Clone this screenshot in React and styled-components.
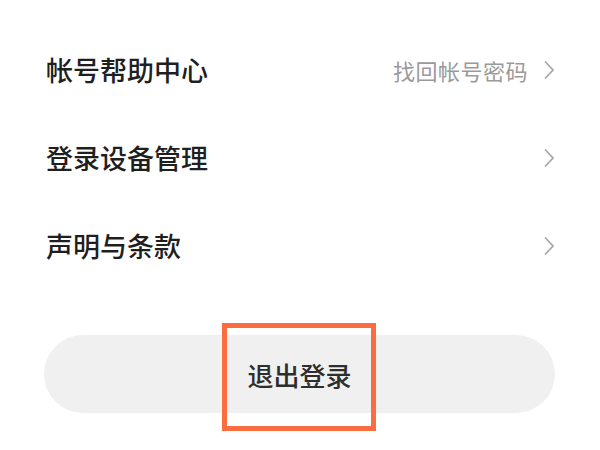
import styled, { createGlobalStyle } from "styled-components";

const GlobalStyle = createGlobalStyle`
  html, body {
    margin: 0;
    padding: 0;
    background: #ffffff;
  }
  body {
    font-family: "Noto Sans CJK SC", "Noto Sans", sans-serif;
  }
`;

const Page = styled.div`
  width: 600px;
  height: 450px;
  box-sizing: border-box;
  padding: 25px 45px 0 44px;
  background: #ffffff;
  overflow: hidden;
`;

const List = styled.div`
  display: flex;
  flex-direction: column;
`;

const Row = styled.div`
  height: 88px;
  display: flex;
  align-items: center;
  justify-content: space-between;
  padding-left: 2px;
`;

const Label = styled.span`
  font-size: 27px;
  font-weight: 500;
  color: #1f1f1f;
`;

const Side = styled.div`
  display: flex;
  align-items: center;
  gap: 15px;
  padding-top: 2px;
`;

const Hint = styled.span`
  font-size: 22px;
  color: #9a9a9a;
  letter-spacing: 0.5px;
`;

const Chevron = styled.svg`
  width: 12px;
  height: 20px;
  display: block;
`;

const ButtonWrap = styled.div`
  position: relative;
  margin-top: 46px;
`;

const LogoutButton = styled.button`
  width: 100%;
  height: 78px;
  border: none;
  border-radius: 39px;
  background: #f0f0f0;
  font-family: inherit;
  font-size: 26px;
  font-weight: 500;
  color: #2e2e2e;
  display: flex;
  align-items: center;
  justify-content: center;
  padding: 0;
`;

const Highlight = styled.div`
  position: absolute;
  left: 178px;
  top: -12px;
  width: 154px;
  height: 108px;
  box-sizing: border-box;
  border: 5px solid #f96d41;
  pointer-events: none;
`;

const Arrow = () => (
  <Chevron viewBox="0 0 12 20">
    <path d="M2 1.5 L10 10 L2 18.5" fill="none" stroke="#a8a8a8" strokeWidth="1.8" />
  </Chevron>
);

const rows = [
  { label: "帐号帮助中心", hint: "找回帐号密码" },
  { label: "登录设备管理" },
  { label: "声明与条款" },
];

export default function App() {
  return (
    <>
      <GlobalStyle />
      <Page>
        <List>
          {rows.map((row) => (
            <Row key={row.label}>
              <Label>{row.label}</Label>
              <Side>
                {row.hint && <Hint>{row.hint}</Hint>}
                <Arrow />
              </Side>
            </Row>
          ))}
        </List>
        <ButtonWrap>
          <LogoutButton>退出登录</LogoutButton>
          <Highlight />
        </ButtonWrap>
      </Page>
    </>
  );
}
